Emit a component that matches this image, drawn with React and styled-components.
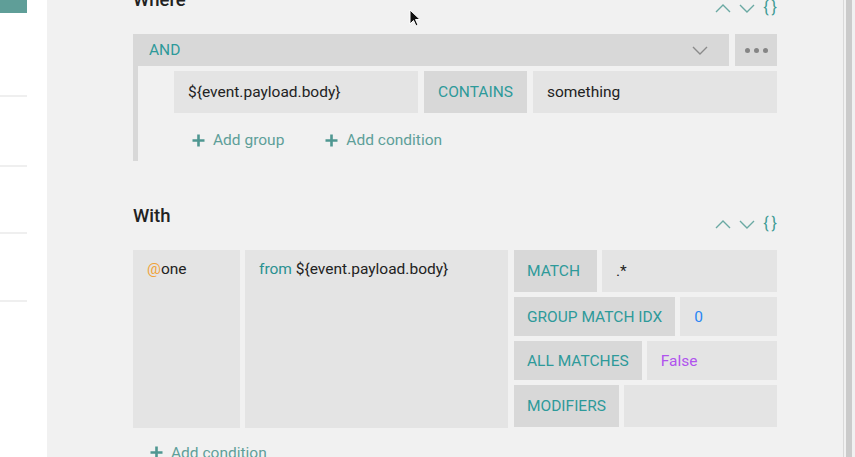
import React from 'react';
import styled, { createGlobalStyle } from 'styled-components';

const GlobalStyle = createGlobalStyle`
  html, body {
    margin: 0;
    padding: 0;
    height: 100%;
    overflow: hidden;
  }
  body {
    font-family: Roboto, "Liberation Sans", sans-serif;
    font-size: 15.5px;
    color: #222;
  }
`;

const Page = styled.div`
  display: flex;
  height: 457px;
  overflow: hidden;
  position: relative;
`;

const Sidebar = styled.div`
  width: 47px;
  flex: none;
  background: #fff;
  display: flex;
  flex-direction: column;
`;

const SideTab = styled.div`
  width: 27px;
  height: 13px;
  background: #5f9e98;
`;

const SideItem = styled.div`
  width: 27px;
  height: ${(p) => p.$h}px;
  border-bottom: 2px solid #efefef;
`;

const Main = styled.div`
  flex: 1;
  background: #f1f1f1;
  padding: 0 66px 0 86px;
  margin-top: -16px;
`;

const Scrollbar = styled.div`
  width: 12px;
  flex: none;
  background: #f1f1f1;
  border-left: 1px solid #d9d9d9;
  display: flex;
  padding-left: 2px;
  box-sizing: border-box;
`;

const Thumb = styled.div`
  width: 6px;
  background: #cbcbcb;
`;

const Header = styled.div`
  display: flex;
  justify-content: space-between;
  align-items: flex-start;
  margin-bottom: ${(p) => p.$mb}px;
`;

const Title = styled.h3`
  margin: 0;
  font-size: 18.5px;
  font-weight: 500;
  line-height: 32px;
  color: #222;
`;

const Controls = styled.div`
  display: flex;
  align-items: center;
  gap: 8px;
  margin-top: 16px;
  height: 16px;
`;

const Braces = styled.span`
  color: #3e9b95;
  font-size: 16px;
  letter-spacing: 3px;
  margin-right: -3px;
  line-height: 16px;
`;

const Chevron = ({ up, color = '#6aa9a3', w = 16 }) => (
  <svg width={w} height="9" viewBox="0 0 16 9">
    <path
      d={up ? 'M1 8 L8 1 L15 8' : 'M1 1 L8 8 L15 1'}
      fill="none"
      stroke={color}
      strokeWidth="1.4"
    />
  </svg>
);

const GroupBar = styled.div`
  display: flex;
  gap: 6px;
  height: 32px;
`;

const Operator = styled.div`
  flex: 1;
  background: #d8d8d8;
  display: flex;
  align-items: center;
  justify-content: space-between;
  padding: 0 21px 0 16px;
  color: #2e9a9a;
`;

const MoreButton = styled.div`
  width: 42px;
  background: #d8d8d8;
  display: flex;
  align-items: center;
  justify-content: center;
  gap: 4px;
`;

const Dot = styled.span`
  width: 5px;
  height: 5px;
  border-radius: 50%;
  background: #858585;
`;

const GroupBody = styled.div`
  border-left: 5px solid #d8d8d8;
  padding: 5px 0 0 36px;
`;

const ConditionRow = styled.div`
  display: flex;
  gap: 6px;
  height: 42px;
`;

const Field = styled.div`
  flex: ${(p) => (p.$grow ? 1 : 'none')};
  background: ${(p) => (p.$label ? '#d8d8d8' : '#e4e4e4')};
  color: ${(p) => (p.$label ? '#2e9a9a' : '#222')};
  display: flex;
  align-items: center;
  padding: 0 14px;
  white-space: nowrap;
`;

const Actions = styled.div`
  display: flex;
  gap: 41px;
  height: 48px;
  align-items: center;
  padding-left: ${(p) => p.$pl}px;
  padding-top: ${(p) => p.$pt}px;
  box-sizing: border-box;
`;

const AddButton = styled.div`
  display: flex;
  align-items: center;
  gap: 8px;
  color: #5e9f99;
`;

const PlusIcon = () => (
  <svg width="13" height="13" viewBox="0 0 13 13">
    <path d="M6.5 0.5 V12.5 M0.5 6.5 H12.5" stroke="#4f9791" strokeWidth="2.6" />
  </svg>
);

const Section = styled.section`
  margin-bottom: ${(p) => p.$mb}px;
`;

const WithBlock = styled.div`
  display: flex;
  gap: 5px;
  height: 178px;
`;

const Cell = styled.div`
  width: ${(p) => p.$w}px;
  flex: none;
  background: #e4e4e4;
  padding: 10px 14px;
  box-sizing: border-box;
  white-space: nowrap;
`;

const Accent = styled.span`
  color: ${(p) => p.$c};
`;

const Options = styled.div`
  flex: 1;
  margin-left: 1px;
  display: grid;
  grid-template-rows: 42px 39px 39px 42px;
  row-gap: 5px;
`;

const OptionRow = styled.div`
  display: flex;
  gap: 5px;
`;

const OptionLabel = styled.div`
  min-width: 83px;
  box-sizing: border-box;
  background: #d8d8d8;
  color: #2e9a9a;
  padding: 0 13px;
  display: flex;
  align-items: center;
  white-space: nowrap;
`;

const OptionValue = styled.div`
  flex: 1;
  background: #e4e4e4;
  color: ${(p) => p.$c || '#222'};
  padding: 0 14px;
  display: flex;
  align-items: center;
`;

const Cursor = styled.svg`
  position: absolute;
  left: 409px;
  top: 9px;
`;

const SectionControls = () => (
  <Controls>
    <Chevron up />
    <Chevron />
    <Braces>{'{}'}</Braces>
  </Controls>
);

const options = [
  { label: 'MATCH', value: '.*' },
  { label: 'GROUP MATCH IDX', value: '0', color: '#2a86f5' },
  { label: 'ALL MATCHES', value: 'False', color: '#b053ee' },
  { label: 'MODIFIERS', value: '' },
];

export default function App() {
  return (
    <Page>
      <GlobalStyle />
      <Sidebar>
        <SideTab />
        <SideItem $h={82} />
        <SideItem $h={68} />
        <SideItem $h={65} />
        <SideItem $h={66} />
      </Sidebar>
      <Main>
        <Section $mb={39}>
          <Header $mb={18}>
            <Title>Where</Title>
            <SectionControls />
          </Header>
          <GroupBar>
            <Operator>
              AND
              <Chevron color="#8a8a8a" />
            </Operator>
            <MoreButton>
              <Dot />
              <Dot />
              <Dot />
            </MoreButton>
          </GroupBar>
          <GroupBody>
            <ConditionRow>
              <Field $grow>{'${event.payload.body}'}</Field>
              <Field $label>CONTAINS</Field>
              <Field $grow>something</Field>
            </ConditionRow>
            <Actions $pl={18} $pt={6}>
              <AddButton>
                <PlusIcon />
                Add group
              </AddButton>
              <AddButton>
                <PlusIcon />
                Add condition
              </AddButton>
            </Actions>
          </GroupBody>
        </Section>
        <Section $mb={0}>
          <Header $mb={18}>
            <Title>With</Title>
            <SectionControls />
          </Header>
          <WithBlock>
            <Cell $w={107}>
              <Accent $c="#f0a33a">@</Accent>one
            </Cell>
            <Cell $w={263}>
              <Accent $c="#2a9191">from</Accent> {'${event.payload.body}'}
            </Cell>
            <Options>
              {options.map((o) => (
                <OptionRow key={o.label}>
                  <OptionLabel>{o.label}</OptionLabel>
                  <OptionValue $c={o.color}>{o.value}</OptionValue>
                </OptionRow>
              ))}
            </Options>
          </WithBlock>
          <Actions $pl={17} $pt={1}>
            <AddButton>
              <PlusIcon />
              Add condition
            </AddButton>
          </Actions>
        </Section>
      </Main>
      <Scrollbar>
        <Thumb />
      </Scrollbar>
      <Cursor width="12" height="19" viewBox="0 0 12 19">
        <path d="M1 1 L1 15 L4.5 11.5 L7 17 L9 16 L6.5 10.5 L11 10.5 Z" fill="#111" stroke="#fff" strokeWidth="1" />
      </Cursor>
    </Page>
  );
}
